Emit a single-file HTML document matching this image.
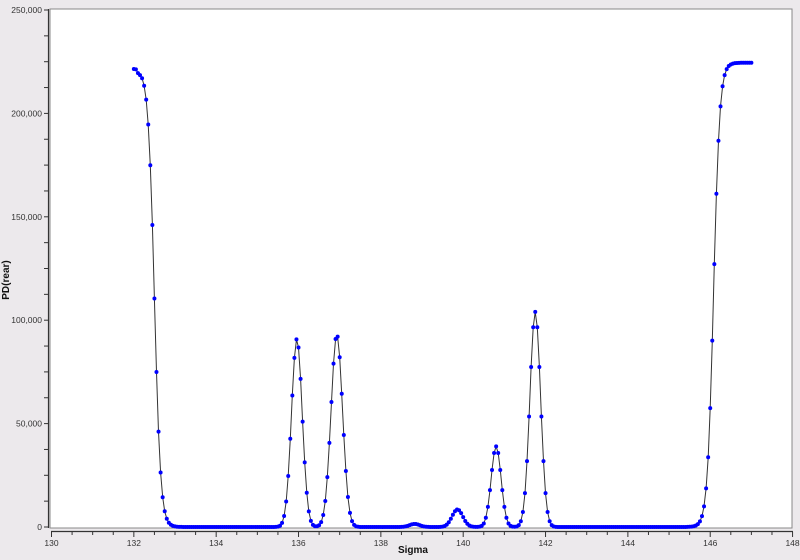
<!DOCTYPE html>
<html><head><style>
html,body{margin:0;padding:0;background:#ece9ec;}
svg{display:block;font-family:"Liberation Sans",sans-serif;}
</style></head><body>
<svg id="s" width="800" height="560" xmlns="http://www.w3.org/2000/svg">
<rect x="0" y="0" width="800" height="560" fill="#ece9ec"/>
<rect x="50" y="9" width="742" height="519" fill="#fff" stroke="#888" stroke-width="1"/>
<line x1="48.5" y1="9" x2="48.5" y2="528" stroke="#333" stroke-width="1.2"/>
<line x1="51" y1="531.5" x2="793" y2="531.5" stroke="#333" stroke-width="1.2"/>
<g id="ax" font-size="8.5" fill="#333"></g>
<text x="413" y="553" font-size="10" font-weight="bold" text-anchor="middle" fill="#111">Sigma</text>
<text transform="translate(9,280) rotate(-90)" font-size="10" font-weight="bold" text-anchor="middle" fill="#111">PD(rear)</text>
<polyline id="ln" fill="none" stroke="#333" stroke-width="1"/>
<g id="pts" fill="#0000ff"></g>
</svg>
<script>
var NS="http://www.w3.org/2000/svg";
function X(s){return 51.5+(s-130)*41.17;}
function Y(v){return 527-v*517/250000;}
var ax=document.getElementById('ax');
function el(t,a,p){var e=document.createElementNS(NS,t);for(var k in a)e.setAttribute(k,a[k]);(p||ax).appendChild(e);return e;}
for(var i=0;i<=20;i++){var v=i*12500,y=Y(v);
 el('line',{x1:44,x2:48,y1:y,y2:y,stroke:'#333'});
 if(i%4==0){var t=el('text',{x:42,y:y+3,'text-anchor':'end'});t.textContent=v==0?'0':(v/1000)+',000';}}
for(var i=0;i<=36;i++){var s=130+i*0.5,x=X(s);
 el('line',{x1:x,x2:x,y1:532,y2:i%4==0?537:535,stroke:'#333'});
 if(i%4==0){var t=el('text',{x:x,y:546,'text-anchor':'middle'});t.textContent=s;}}
function g(s,c,a,w){return a*Math.exp(-Math.pow((s-c)/w,2)/2);}
function f(s){var v=221000/(1+Math.exp((s-132.5)/0.075))+224500/(1+Math.exp(-(s-146.08)/0.075));
 v+=g(s,135.96,91000,0.13)+g(s,136.93,93000,0.14)+g(s,138.82,1500,0.12)+g(s,139.86,8500,0.13)+g(s,140.8,39000,0.12)+g(s,141.75,104000,0.13);
 if(s<132.2)v=221500-(s-132)*4000*(s>132.1?5:1);
 return v;}
var pts=[],pg=document.getElementById('pts');
for(var s=132;s<=147.0001;s+=0.05){var x=X(s),y=Y(f(s));pts.push(x.toFixed(1)+','+y.toFixed(1));
 el('circle',{cx:x,cy:y,r:2},pg);}
document.getElementById('ln').setAttribute('points',pts.join(' '));
</script>
</body></html>
